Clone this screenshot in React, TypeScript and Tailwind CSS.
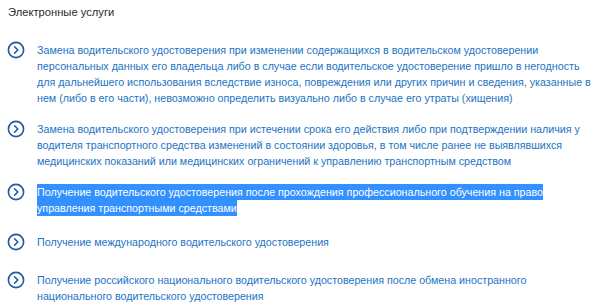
import React from "react";

const items: { text: React.ReactNode; extra?: string }[] = [
  {
    text: "Замена водительского удостоверения при изменении содержащихся в водительском удостоверении персональных данных его владельца либо в случае если водительское удостоверение пришло в негодность для дальнейшего использования вследствие износа, повреждения или других причин и сведения, указанные в нем (либо в его части), невозможно определить визуально либо в случае его утраты (хищения)",
  },
  {
    text: "Замена водительского удостоверения при истечении срока его действия либо при подтверждении наличия у водителя транспортного средства изменений в состоянии здоровья, в том числе ранее не выявлявшихся медицинских показаний или медицинских ограничений к управлению транспортным средством",
  },
  {
    text: (
      <span className="bg-[#3390ff] text-white py-[2px] [box-decoration-break:clone]">
        Получение водительского удостоверения после прохождения профессионального обучения на право управления транспортными средствами
      </span>
    ),
    extra: "pb-[3px]",
  },
  { text: "Получение международного водительского удостоверения" },
  {
    text: "Получение российского национального водительского удостоверения после обмена иностранного национального водительского удостоверения",
  },
];

function Chevron() {
  return (
    <svg width="18" height="18" viewBox="0 0 18 18" className="shrink-0">
      <circle cx="9" cy="9" r="7.6" fill="none" stroke="#1d5aa0" strokeWidth="1.6" />
      <path d="M7.6 5.8 L10.8 9 L7.6 12.2" fill="none" stroke="#1d5aa0" strokeWidth="1.6" strokeLinecap="round" strokeLinejoin="round" />
    </svg>
  );
}

export default function App() {
  return (
    <div className="w-[600px] h-[308px] bg-white overflow-hidden font-['Liberation_Sans',Arial,sans-serif]">
      <div className="pl-[8px] pt-[4px] text-[11.2px] leading-[16px] text-[#2a2a2a]">Электронные услуги</div>
      <div className="flex flex-col gap-[15px] pt-[22px]">
        {items.map((it, i) => (
          <div key={i} className={`flex items-start pl-[7px] ${it.extra ?? ""}`}>
            <div className="w-[30px] h-[24px] -mt-[1px]">
              <Chevron />
            </div>
            <div className="text-[10.7px] leading-[16px] text-[#1b74c4] pr-[2px] w-[563px]">{it.text}</div>
          </div>
        ))}
      </div>
    </div>
  );
}
